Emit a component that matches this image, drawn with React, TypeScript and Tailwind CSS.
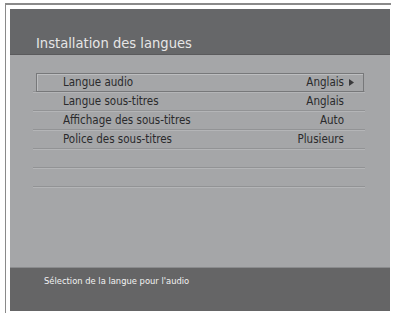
const ROWS = [
  { label: "Langue audio", value: "Anglais", selected: true },
  { label: "Langue sous-titres", value: "Anglais" },
  { label: "Affichage des sous-titres", value: "Auto" },
  { label: "Police des sous-titres", value: "Plusieurs" },
  { label: "", value: "" },
  { label: "", value: "" },
];

export default function App() {
  return (
    <div className="w-[393px] h-[317px] bg-white overflow-hidden font-['DejaVu_Sans_Condensed','DejaVu_Sans',sans-serif]">
      <div className="ml-[5px] mt-[3px] w-[386px] h-[310px] border-t-2 border-l border-[#8a8a8a] pl-[4px] pt-[4px]">
        <div className="w-[380px] h-[302px] flex flex-col bg-[#a5a6a8]">
          {/* Header */}
          <div className="h-[46px] bg-[#666769] border-b border-[#5a5a5c] flex items-end px-[26px] pb-[3px]">
            <h1 className="text-[14.6px] text-[#e6e6e6] leading-none">
              Installation des langues
            </h1>
          </div>

          {/* List */}
          <div className="flex-1 pt-[18px]">
            {ROWS.map((row, i) => (
              <div key={i} className="ml-[23px] w-[332px] h-[19px] border-b border-[#929395] shadow-[0_1px_0_#b4b5b7]">
                {row.selected ? (
                  <div className="ml-[3px] w-[328px] h-[19px] border border-[#77787a] shadow-[inset_1px_1px_0_#bdbec0] flex items-center pl-[26px] pr-[9px] text-[11.5px] text-[#2a2a2c]">
                    <span>{row.label}</span>
                    <span className="ml-auto">{row.value}</span>
                    <svg width="5" height="7" viewBox="0 0 5 7" className="ml-[5px]">
                      <path d="M0 0 L5 3.5 L0 7 Z" fill="#3a3a3c" />
                    </svg>
                  </div>
                ) : (
                  <div className="h-[19px] flex items-center pl-[30px] pr-[21px] text-[11.5px] text-[#2a2a2c]">
                    <span>{row.label}</span>
                    <span className="ml-auto">{row.value}</span>
                  </div>
                )}
              </div>
            ))}
          </div>

          {/* Footer */}
          <div className="h-[44px] bg-[#656566] border-t border-[#8a8b8d] pl-[34px] pt-[6px]">
            <p className="text-[9.3px] text-[#f2f2f2]">
              Sélection de la langue pour l'audio
            </p>
          </div>
        </div>
      </div>
    </div>
  );
}
